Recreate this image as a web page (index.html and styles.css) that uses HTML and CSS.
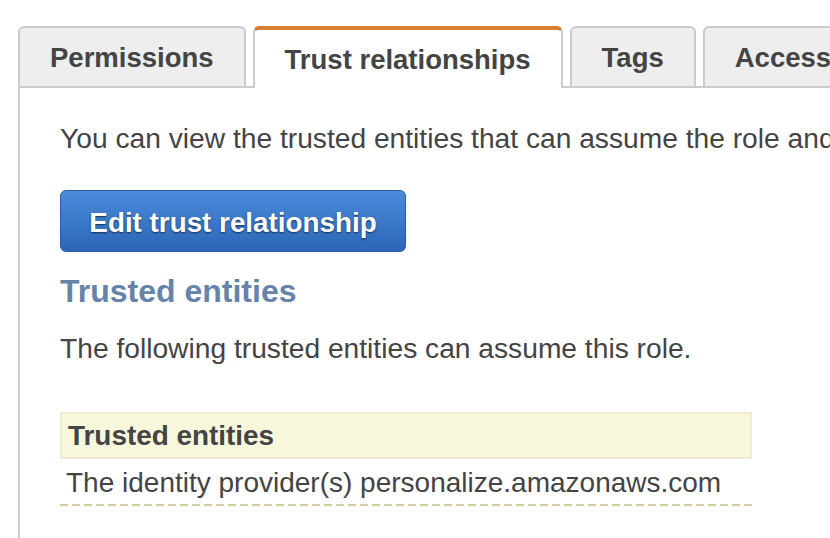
FILE: index.html
```html
<!DOCTYPE html>
<html>
<head>
<meta charset="utf-8">
<link rel="stylesheet" href="styles.css">
</head>
<body>
<div class="page">
  <div class="tabs">
    <div class="tab">Permissions</div>
    <div class="tab active">Trust relationships</div>
    <div class="tab">Tags</div>
    <div class="tab">Access Advisor</div>
  </div>
  <div class="panel">
    <p class="intro">You can view the trusted entities that can assume the role and the access conditions for the role.</p>
    <button class="btn">Edit trust relationship</button>
    <h2 class="heading">Trusted entities</h2>
    <p class="desc">The following trusted entities can assume this role.</p>
    <div class="table">
      <div class="thead">Trusted entities</div>
      <div class="row">The identity provider(s) personalize.amazonaws.com</div>
    </div>
  </div>
</div>
</body>
</html>
```
FILE: styles.css
```css
html, body {
  margin: 0;
  padding: 0;
  background: #fff;
  overflow: hidden;
}
body {
  font-family: "Liberation Sans", Arial, sans-serif;
  color: #444;
  width: 830px;
  height: 538px;
}
.page {
  padding: 26px 0 0 18px;
  width: 1100px;
}
.tabs {
  display: flex;
  align-items: flex-end;
  gap: 7px;
  height: 60px;
  position: relative;
  z-index: 1;
}
.tab {
  box-sizing: border-box;
  height: 60px;
  padding: 0 30px;
  border: 2px solid #cbcbcb;
  border-bottom: none;
  border-radius: 6px 6px 0 0;
  background: #eeeeee;
  font-weight: bold;
  font-size: 27.5px;
  line-height: 60px;
  color: #444;
  white-space: nowrap;
}
.tab.active {
  background: #fff;
  border-top: 4px solid #d98030;
  height: 62px;
  margin-bottom: -2px;
  line-height: 59px;
  padding: 0 30px;
  font-size: 27.5px;
}
.panel {
  border-top: 2px solid #cbcbcb;
  border-left: 2px solid #cbcbcb;
  padding: 0 0 40px 40px;
  height: 600px;
}
.intro {
  margin: 33px 0 0;
  font-size: 28.2px;
  line-height: 34px;
  white-space: nowrap;
}
.btn {
  display: block;
  margin-top: 35px;
  width: 346px;
  height: 62px;
  box-sizing: border-box;
  border: 1px solid #2a5ca8;
  border-radius: 6px;
  background: linear-gradient(#4a8bdb, #2c66b6);
  color: #fff;
  font-family: "Liberation Sans", Arial, sans-serif;
  font-weight: bold;
  font-size: 27.8px;
  line-height: 60px;
  text-shadow: 0 1px 2px rgba(0, 0, 0, 0.6);
  padding: 2px 0 0;
  margin-left: 0;
}
.heading {
  margin: 20px 0 0;
  font-size: 32px;
  line-height: 38px;
  font-weight: bold;
  color: #6683aa;
}
.desc {
  margin: 21px 0 0;
  font-size: 28.2px;
  line-height: 34px;
}
.table {
  margin-top: 47px;
  width: 692px;
}
.thead {
  box-sizing: border-box;
  height: 47px;
  background: #f8f7dc;
  border: 2px solid #efedcd;
  padding-left: 6px;
  font-weight: bold;
  font-size: 27.9px;
  line-height: 44px;
}
.row {
  padding: 7px 0 0 6px;
  height: 40px;
  font-size: 28px;
  line-height: 34px;
  background: repeating-linear-gradient(to right, #d4d0a2 0 8px, transparent 8px 12px) left bottom / 100% 2px no-repeat;
  width: 690px;
}
```
